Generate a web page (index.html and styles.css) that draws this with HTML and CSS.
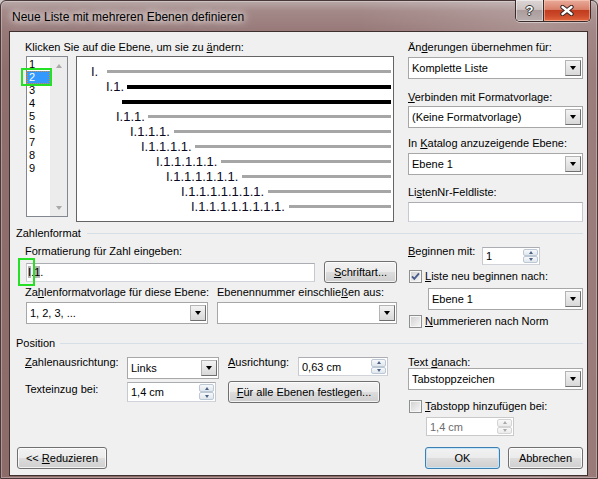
FILE: index.html
```html
<!DOCTYPE html>
<html lang="de">
<head>
<meta charset="utf-8">
<title>Neue Liste mit mehreren Ebenen definieren</title>
<link rel="stylesheet" href="styles.css">
</head>
<body>
<div class="window">
  <div class="titlebar">
    <div class="title">Neue Liste mit mehreren Ebenen definieren</div>
    <div class="caption">
      <div class="cap-btn help"><span>?</span></div>
      <div class="cap-btn close">
        <svg width="14" height="11" viewBox="0 0 14 11"><path d="M2.5 2 L11.5 9 M11.5 2 L2.5 9" stroke="#3a2424" stroke-width="4.4" stroke-linecap="round" fill="none"/><path d="M2.5 2 L11.5 9 M11.5 2 L2.5 9" stroke="#fff" stroke-width="2.4" stroke-linecap="round" fill="none"/></svg>
      </div>
    </div>
  </div>
  <div class="client">
    <div class="top">
      <div class="top-left">
        <div class="lbl">Klicken Sie auf die Ebene, um sie zu <u>ä</u>ndern:</div>
        <div class="top-row">
          <div class="levels">
            <div class="items">
              <div class="item">1</div>
              <div class="item sel">2</div>
              <div class="item">3</div>
              <div class="item">4</div>
              <div class="item">5</div>
              <div class="item">6</div>
              <div class="item">7</div>
              <div class="item">8</div>
              <div class="item">9</div>
            </div>
            <div class="vscroll">
              <div class="sb-btn"><i class="arr-up"></i></div>
              <div class="sb-btn"><i class="arr-dn gray"></i></div>
            </div>
          </div>
          <div class="preview">
            <div class="pv l1"><span>I.</span><b class="bar"></b></div>
            <div class="pv l2"><span>I.1.</span><b class="bar blk"></b></div>
            <div class="pv l3"><b class="bar blk"></b></div>
            <div class="pv l4"><span>I.1.1.</span><b class="bar"></b></div>
            <div class="pv l5"><span>I.1.1.1.</span><b class="bar"></b></div>
            <div class="pv l6"><span>I.1.1.1.1.</span><b class="bar"></b></div>
            <div class="pv l7"><span>I.1.1.1.1.1.</span><b class="bar"></b></div>
            <div class="pv l8"><span>I.1.1.1.1.1.1.</span><b class="bar"></b></div>
            <div class="pv l9"><span>I.1.1.1.1.1.1.1.</span><b class="bar"></b></div>
            <div class="pv l10"><span>I.1.1.1.1.1.1.1.1.</span><b class="bar"></b></div>
          </div>
        </div>
      </div>
      <div class="top-right">
        <div class="lbl">Än<u>d</u>erungen übernehmen für:</div>
        <div class="combo tr-c1"><span class="val">Komplette Liste</span><span class="dd"><i class="arr-dn"></i></span></div>
        <div class="lbl tr-l2"><u>V</u>erbinden mit Formatvorlage:</div>
        <div class="combo tr-c2"><span class="val">(Keine Formatvorlage)</span><span class="dd"><i class="arr-dn"></i></span></div>
        <div class="lbl tr-l3">In <u>K</u>atalog anzuzeigende Ebene:</div>
        <div class="combo tr-c3"><span class="val">Ebene 1</span><span class="dd"><i class="arr-dn"></i></span></div>
        <div class="lbl tr-l4">Li<u>s</u>tenNr-Feldliste:</div>
        <div class="tb tr-t4"></div>
      </div>
    </div>

    <div class="group g-zf"><span>Zahlenformat</span></div>
    <div class="zf">
      <div class="zf-left">
        <div class="lbl zf-l1">Formatierung für Zahl eingeben:</div>
        <div class="zf-row">
          <div class="tb fmt"><span class="fld">I</span>.<span class="fld">1</span>.</div>
          <div class="btn schrift"><span><u>S</u>chriftart...</span></div>
        </div>
        <div class="zf-labels">
          <div class="lbl zl-a">Za<u>h</u>lenformatvorlage für diese Ebene:</div>
          <div class="lbl">Ebenennummer einschlie<u>ß</u>en aus:</div>
        </div>
        <div class="zf-combos">
          <div class="combo zc-a"><span class="val">1, 2, 3, ...</span><span class="dd"><i class="arr-dn"></i></span></div>
          <div class="combo zc-b"><span class="val"></span><span class="dd"><i class="arr-dn"></i></span></div>
        </div>
      </div>
      <div class="zf-right">
        <div class="begin">
          <div class="lbl begin-lbl"><u>B</u>eginnen mit:</div>
          <div class="spin sp-begin"><span class="val">1</span><span class="ud"><i><b class="sa-up"></b></i><i><b class="sa-dn"></b></i></span></div>
        </div>
        <div class="chk-row cr-1"><span class="chk"><svg width="11" height="11" viewBox="0 0 11 11"><path d="M2 5.3 4.3 7.8 9 2.4" fill="none" stroke="#4a5b8c" stroke-width="1.9"/></svg></span><span><u>L</u>iste neu beginnen nach:</span></div>
        <div class="combo zr-combo"><span class="val">Ebene 1</span><span class="dd"><i class="arr-dn"></i></span></div>
        <div class="chk-row cr-2"><span class="chk"></span><span><u>N</u>ummerieren nach Norm</span></div>
      </div>
    </div>

    <div class="group g-pos"><span>Position</span></div>
    <div class="pos">
      <div class="pos-grid">
        <div class="lbl pl-1"><u>Z</u>ahlenausrichtung:</div>
        <div class="combo pc-links"><span class="val">Links</span><span class="dd"><i class="arr-dn"></i></span></div>
        <div class="lbl pl-1"><u>A</u>usrichtung:</div>
        <div class="spin sp-aus"><span class="val">0,63 cm</span><span class="ud"><i><b class="sa-up"></b></i><i><b class="sa-dn"></b></i></span></div>
        <div class="lbl pl-2">Texteinzu<u>g</u> bei:</div>
        <div class="spin sp-text"><span class="val">1,4 cm</span><span class="ud"><i><b class="sa-up"></b></i><i><b class="sa-dn"></b></i></span></div>
        <div class="btn all"><span><u>F</u>ür alle Ebenen festlegen...</span></div>
      </div>
      <div class="pos-right">
        <div class="lbl td-lbl">Text <u>d</u>anach:</div>
        <div class="combo td-combo"><span class="val">Tabstoppzeichen</span><span class="dd"><i class="arr-dn"></i></span></div>
        <div class="chk-row cr-3"><span class="chk"></span><span><u>T</u>abstopp hinzufügen bei:</span></div>
        <div class="spin sp-dis"><span class="val">1,4 cm</span><span class="ud"><i><b class="sa-up"></b></i><i><b class="sa-dn"></b></i></span></div>
      </div>
    </div>

    <div class="footer">
      <div class="btn reduz"><span>&lt;&lt; <u>R</u>eduzieren</span></div>
      <div class="btn def ok"><span>OK</span></div>
      <div class="btn cancel"><span>Abbrechen</span></div>
    </div>
  </div>
  <div class="mark mark-level"></div>
  <div class="mark mark-field"></div>
</div>
</body>
</html>
```

FILE: styles.css
```css
* { box-sizing: border-box; }
html, body { margin: 0; padding: 0; }
body {
  width: 598px;
  height: 479px;
  overflow: hidden;
  background: #cfc8c8;
  font-family: "Liberation Sans", Arial, sans-serif;
  font-size: 11px;
  color: #000;
}
u { text-decoration: underline; text-underline-offset: 1px; }
b, i { font-style: normal; font-weight: normal; display: block; }

.window {
  position: relative;
  width: 598px;
  height: 479px;
  border: 1px solid #4a3838;
  border-radius: 6px 6px 0 0;
  display: flex;
  flex-direction: column;
  background:
    linear-gradient(90deg, rgba(255,255,255,0) 60%, rgba(255,255,255,0.18) 90%, rgba(255,255,255,0.1) 100%),
    linear-gradient(180deg, #b8a9a8 0px, #a38988 10px, #977978 30px, #8f6f6d 70px, #8c6b69 100%);
  box-shadow: inset 0 0 0 1px rgba(255,255,255,0.3);
}

.titlebar {
  height: 30px;
  flex: none;
  display: flex;
  align-items: flex-start;
}
.title {
  padding: 9px 0 0 11px;
  font-size: 12px;
  line-height: 15px;
  white-space: nowrap;
  color: #000;
  text-shadow: 0 0 6px rgba(255,255,255,0.95), 0 0 10px rgba(255,255,255,0.85), 0 0 16px rgba(255,255,255,0.7);
}
.caption {
  margin-left: auto;
  margin-right: 6px;
  margin-top: -1px;
  display: flex;
  border: 1px solid #3b2b2b;
  border-top: none;
  border-radius: 0 0 5px 5px;
  overflow: hidden;
  box-shadow: 0 1px 0 rgba(255,255,255,0.45);
}
.cap-btn {
  height: 21px;
  display: flex;
  align-items: center;
  justify-content: center;
}
.help {
  width: 28px;
  border-right: 1px solid #3b2b2b;
  background: linear-gradient(180deg, #ddd5d5 0%, #cbc1c1 45%, #ab9d9d 50%, #b9adad 100%);
  box-shadow: inset 0 0 0 1px rgba(255,255,255,0.45);
}
.help span {
  font-weight: bold;
  font-size: 13px;
  line-height: 13px;
  color: #fff;
  text-shadow: 1px 0 0 #333, -1px 0 0 #333, 0 1px 0 #333, 0 -1px 0 #333;
}
.close {
  width: 46px;
  background: linear-gradient(180deg, #e9ab9b 0%, #d9806a 45%, #c23c1f 50%, #cc4a2a 75%, #e3673f 100%);
  box-shadow: inset 0 0 0 1px rgba(255,215,200,0.5);
}

.client {
  flex: 1;
  margin: 0 9px 2px 8px;
  border: 1px solid #3f3030;
  background: #f0f0f0;
  padding: 8px 4px 0 15px;
  display: flex;
  flex-direction: column;
}
.lbl { line-height: 14px; white-space: nowrap; }

/* top section */
.top { display: flex; gap: 14px; }
.top-left { width: 369px; display: flex; flex-direction: column; }
.top-row { display: flex; align-items: flex-start; margin-top: 2px; }
.levels {
  margin-left: 1px;
  width: 42px;
  height: 161px;
  border: 1px solid #828790;
  background: #fff;
  display: flex;
}
.items { width: 23px; padding-top: 1px; }
.item { height: 13px; line-height: 13px; padding-left: 2px; }
.item.sel {
  background: #3399ff;
  color: #fff;
  border: 1px dotted #d98a36;
  padding-left: 1px;
  line-height: 11px;
}
.vscroll {
  width: 17px;
  background: #ececec;
  display: flex;
  flex-direction: column;
  justify-content: space-between;
}
.sb-btn { height: 17px; display: flex; align-items: center; justify-content: center; }
.arr-up {
  width: 1px; height: 0;
  border-left: 3px solid transparent;
  border-right: 3px solid transparent;
  border-bottom: 4px solid #a8a8a8;
}
.arr-dn {
  width: 1px; height: 0;
  border-left: 3px solid transparent;
  border-right: 3px solid transparent;
  border-top: 4px solid #000;
}
.arr-dn.gray { border-top-color: #a8a8a8; }

.preview {
  margin-left: 8px;
  width: 318px;
  height: 166px;
  border: 1px solid #646464;
  background: #fff;
  padding: 7px 2px 0 0;
}
.pv {
  height: 15px;
  display: flex;
  align-items: center;
  font-size: 13px;
  white-space: nowrap;
  color: #0a0a1e;
}
.pv span { flex: none; }
.bar { flex: 1; height: 3px; background: #a6a6a6; }
.bar.blk { height: 4px; background: #000; }
.l1 { padding-left: 14px; } .l1 span { width: 16px; }
.l2 { padding-left: 29px; } .l2 span { width: 21px; }
.l3 { padding-left: 45px; }
.l4 { padding-left: 39px; } .l4 span { width: 32px; }
.l5 { padding-left: 53px; } .l5 span { width: 44px; }
.l6 { padding-left: 64px; } .l6 span { width: 54px; }
.l7 { padding-left: 79px; } .l7 span { width: 65px; }
.l8 { padding-left: 89px; } .l8 span { width: 76px; }
.l9 { padding-left: 104px; } .l9 span { width: 87px; }
.l10 { padding-left: 114px; } .l10 span { width: 98px; }

.top-right { width: 175px; display: flex; flex-direction: column; }
.tr-c1 { margin-top: 3px; }
.tr-l2 { margin-top: 11px; }
.tr-c2 { margin-top: 2px; }
.tr-l3 { margin-top: 8px; }
.tr-c3 { margin-top: 3px; }
.tr-l4 { margin-top: 10px; }
.tr-t4 { margin-top: 3px; height: 20px; }

/* controls */
.combo {
  height: 22px;
  border: 1px solid #a7a7a7;
  background: #fff;
  display: flex;
  align-items: center;
  padding-left: 3px;
}
.combo .val { flex: 1; white-space: nowrap; overflow: hidden; }
.combo .dd {
  flex: none;
  width: 16px;
  height: 16px;
  margin-right: 1px;
  border: 1px solid;
  border-color: #b4b4b4 #6f6f6f #6f6f6f #b4b4b4;
  background: linear-gradient(180deg, #f3f3f3, #d8d8d8);
  display: flex;
  align-items: center;
  justify-content: center;
}
.tb {
  border: 1px solid #abadb3;
  border-color: #abadb3 #c6c9cf #d0d4da #c6c9cf;
  background: #fff;
}
.spin {
  display: flex;
  align-items: center;
  border: 1px solid #abadb3;
  border-color: #abadb3 #c6c9cf #d0d4da #c6c9cf;
  background: #fff;
  padding-left: 3px;
  white-space: nowrap;
}
.spin .val { flex: 1; }
.ud {
  flex: none;
  width: 15px;
  align-self: stretch;
  margin: 1px;
  display: flex;
  flex-direction: column;
}
.ud i {
  flex: 1;
  border: 1px solid #bcc8d4;
  border-radius: 2px;
  background: linear-gradient(180deg, #f7f9fb, #dfe6ed);
  display: flex;
  align-items: center;
  justify-content: center;
}
.sa-up {
  width: 1px; height: 0;
  border-left: 2px solid transparent;
  border-right: 2px solid transparent;
  border-bottom: 3px solid #4d6185;
}
.sa-dn {
  width: 1px; height: 0;
  border-left: 2px solid transparent;
  border-right: 2px solid transparent;
  border-top: 3px solid #4d6185;
}
.btn {
  height: 22px;
  border: 1px solid #707070;
  border-radius: 3px;
  background: linear-gradient(180deg, #f2f2f2 0%, #ebebeb 49%, #dddddd 50%, #cfcfcf 100%);
  box-shadow: inset 0 0 0 1px rgba(255,255,255,0.75);
  display: flex;
  align-items: center;
  justify-content: center;
  white-space: nowrap;
}
.btn.def {
  border-color: #3c7fb1;
  box-shadow: inset 0 0 0 1px #c3e6fa;
}
.chk-row { display: flex; align-items: center; height: 13px; line-height: 13px; white-space: nowrap; }
.chk {
  flex: none;
  width: 13px;
  height: 13px;
  margin-left: 1px;
  margin-right: 3px;
  border: 1px solid #8e8f8f;
  background: linear-gradient(135deg, #cfcfcf, #f8f8f8);
  box-shadow: inset 0 0 0 1px #f6f6f6;
}
.chk svg { display: block; }

/* groups */
.group {
  display: flex;
  align-items: center;
  line-height: 14px;
  margin-left: -9px;
  white-space: nowrap;
}
.group::after {
  content: "";
  flex: 1;
  height: 1px;
  background: #d5dfe5;
  margin-left: 6px;
}
.g-zf { margin-top: 4px; }
.g-pos { margin-top: 8px; }
.g-pos::after { margin-left: 5px; }

/* Zahlenformat */
.zf { display: flex; gap: 11px; align-items: flex-start; }
.zf-left { width: 372px; display: flex; flex-direction: column; }
.zf-l1 { margin-top: 4px; }
.zf-row { display: flex; align-items: center; height: 22px; margin-top: 3px; }
.fmt {
  margin-left: 1px;
  width: 289px;
  height: 19px;
  padding-left: 1px;
  line-height: 17px;
  white-space: nowrap;
}
.fld { background: #b4b4b4; }
.schrift { margin-left: 9px; width: 73px; }
.zf-labels { display: flex; margin-top: 2px; }
.zl-a { width: 192px; }
.zf-combos { display: flex; margin-top: 3px; }
.zc-a { margin-left: 1px; width: 182px; }
.zc-b { margin-left: 9px; width: 180px; }

.zf-right { width: 175px; display: flex; flex-direction: column; }
.begin { display: flex; align-items: flex-start; margin-top: 4px; }
.begin-lbl { width: 74px; }
.sp-begin { margin-top: 3px; width: 58px; height: 18px; }
.cr-1 { margin-top: 5px; }
.zr-combo { margin-top: 5px; margin-left: 20px; width: 155px; }
.cr-2 { margin-top: 5px; }

/* Position */
.pos { display: flex; align-items: flex-start; margin-top: 7px; }
.pos-grid {
  width: 363px;
  display: grid;
  grid-template-columns: 102px 101px 70px 90px;
  grid-template-rows: 22px 22px;
  row-gap: 2px;
  align-items: start;
}
.pl-1 { margin-top: -2px; }
.pl-2 { margin-top: 1px; }
.pc-links { width: 92px; }
.sp-aus { width: 90px; height: 19px; }
.sp-text { width: 89px; height: 20px; margin-top: 1px; }
.all { grid-column: 3 / span 2; width: 152px; }
.pos-right { margin-left: 20px; width: 175px; display: flex; flex-direction: column; }
.td-lbl { line-height: 12px; margin-top: -1px; }
.td-combo { margin-top: 0; height: 22px; }
.cr-3 { margin-top: 10px; }
.sp-dis {
  margin-top: 4px;
  margin-left: 18px;
  width: 88px;
  height: 19px;
  color: #6d6d6d;
  border-color: #c9c9c9;
}
.sp-dis .ud i { border-color: #d4d4d4; background: linear-gradient(180deg, #f8f8f8, #ebebeb); }
.sp-dis .sa-up { border-bottom-color: #a9a9a9; }
.sp-dis .sa-dn { border-top-color: #a9a9a9; }

/* footer */
.footer { display: flex; margin-top: 11px; margin-left: -8px; }
.reduz { width: 90px; }
.ok { margin-left: auto; width: 75px; }
.cancel { margin-left: 8px; width: 75px; }

/* annotation marks */
.mark { position: absolute; border: 2px solid #26e026; }
.mark-level { left: 20px; top: 67px; width: 31px; height: 18px; }
.mark-field { left: 17px; top: 257px; width: 17px; height: 28px; }
```
